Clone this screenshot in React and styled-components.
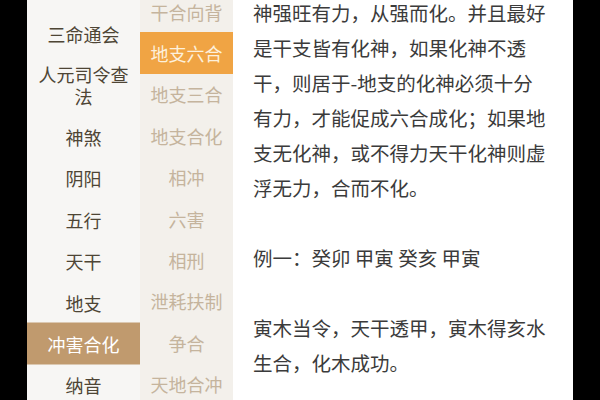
import React from "react";
import styled, { createGlobalStyle } from "styled-components";

const GlobalStyle = createGlobalStyle`
  html, body {
    margin: 0;
    padding: 0;
    background: #000;
  }
  body {
    font-family: "Noto Sans CJK SC", "Noto Sans", sans-serif;
  }
`;

const Screen = styled.div`
  width: 600px;
  height: 400px;
  overflow: hidden;
  display: flex;
  background: #000;
`;

const Phone = styled.div`
  margin-left: 27px;
  width: 546px;
  height: 400px;
  display: flex;
  overflow: hidden;
`;

const Menu = styled.div`
  width: ${p => p.width}px;
  flex-shrink: 0;
  background: ${p => p.bg};
  overflow: hidden;
`;

const MenuList = styled.ul`
  list-style: none;
  margin: 0;
  padding: 0;
  transform: translateY(${p => p.offset}px);
`;

const MenuItem = styled.li`
  display: flex;
  align-items: center;
  justify-content: center;
  text-align: center;
  box-sizing: border-box;
  padding: 0 6px;
  min-height: 41.4px;
  font-size: 18px;
  line-height: 22px;
  color: ${p => (p.active ? p.activeColor : p.color)};
  background: ${p => (p.active ? p.activeBg : "transparent")};
  &[data-tall="true"] {
    min-height: 62px;
  }
`;

const Article = styled.div`
  flex: 1;
  background: #fff;
  padding: 0 22px 0 20px;
  overflow: hidden;
`;

const Para = styled.p`
  margin: 0 0 35px;
  font-size: 19.5px;
  line-height: 35px;
  color: #3b3b3b;
  &:first-child {
    margin-top: -5px;
  }
`;

const primary = [
  { label: "三命通会" },
  { label: "人元司令查法", tall: true },
  { label: "神煞" },
  { label: "阴阳" },
  { label: "五行" },
  { label: "天干" },
  { label: "地支" },
  { label: "冲害合化", active: true },
  { label: "纳音" },
];

const secondary = [
  { label: "干合向背" },
  { label: "地支六合", active: true },
  { label: "地支三合" },
  { label: "地支合化" },
  { label: "相冲" },
  { label: "六害" },
  { label: "相刑" },
  { label: "泄耗扶制" },
  { label: "争合" },
  { label: "天地合冲" },
];

const paragraphs = [
  "神强旺有力，从强而化。并且最好是干支皆有化神，如果化神不透干，则居于-地支的化神必须十分有力，才能促成六合成化；如果地支无化神，或不得力天干化神则虚浮无力，合而不化。",
  "例一：癸卯 甲寅 癸亥 甲寅",
  "寅木当令，天干透甲，寅木得亥水生合，化木成功。",
];

const App = () => (
  <Screen>
    <GlobalStyle />
    <Phone>
      <Menu width={113} bg="#f7f6f4">
        <MenuList offset={12.5}>
          {primary.map(item => (
            <MenuItem
              key={item.label}
              data-tall={!!item.tall}
              active={item.active}
              color="#4e4535"
              activeColor="#fff"
              activeBg="#c09a6e"
            >
              {item.label}
            </MenuItem>
          ))}
        </MenuList>
      </Menu>
      <Menu width={93} bg="#f3f0eb">
        <MenuList offset={-9}>
          {secondary.map(item => (
            <MenuItem
              key={item.label}
              active={item.active}
              color="#c5b49d"
              activeColor="#fdf0dc"
              activeBg="#f0a444"
            >
              {item.label}
            </MenuItem>
          ))}
        </MenuList>
      </Menu>
      <Article>
        {paragraphs.map((text, i) => (
          <Para key={i}>{text}</Para>
        ))}
      </Article>
    </Phone>
  </Screen>
);

export default App;
